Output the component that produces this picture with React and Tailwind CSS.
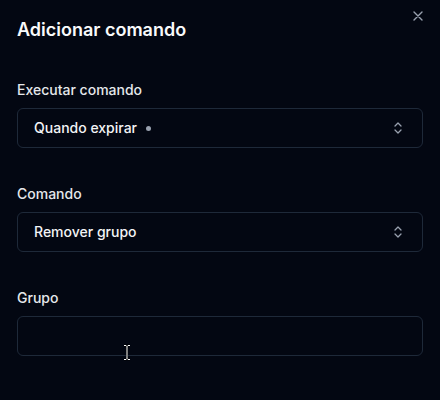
import React from 'react';

const Chevrons = () => (
  <svg viewBox="0 0 8 14" className="h-[14px] w-[8px] text-gray-400" fill="none" stroke="currentColor" strokeWidth="1.3" strokeLinecap="round" strokeLinejoin="round">
    <path d="M1 5 L4 2 L7 5" />
    <path d="M1 9 L4 12 L7 9" />
  </svg>
);

const SelectBox = ({ value, dot }) => (
  <div className="flex h-10 w-full items-center justify-between rounded-md border border-gray-800 pl-4 pr-5">
    <span className="flex items-center gap-[9px] text-sm font-medium text-gray-100">
      {value}
      {dot && <span className="h-[5px] w-[5px] rounded-full bg-gray-400" />}
    </span>
    <Chevrons />
  </div>
);

const Field = ({ label, children }) => (
  <div>
    <label className="mb-2 block text-sm font-medium leading-5 text-gray-200">{label}</label>
    {children}
  </div>
);

export default function App() {
  return (
    <div className="relative min-h-[400px] w-full bg-[#030712] px-[17px] pt-4 font-['Inter',sans-serif]">
      <button className="absolute right-[17px] top-[11px] text-gray-400">
        <svg viewBox="0 0 10 10" className="h-[10px] w-[10px]" fill="none" stroke="currentColor" strokeWidth="1.4" strokeLinecap="round">
          <path d="M1 1 L9 9 M9 1 L1 9" />
        </svg>
      </button>

      <h2 className="text-lg font-semibold leading-7 text-gray-50">Adicionar comando</h2>

      <div className="mt-9 flex flex-col gap-9">
        <Field label="Executar comando">
          <SelectBox value="Quando expirar" dot />
        </Field>
        <Field label="Comando">
          <SelectBox value="Remover grupo" />
        </Field>
        <Field label="Grupo">
          <div className="relative h-10 w-full rounded-md border border-gray-800">
            <svg viewBox="0 0 8 17" className="absolute left-[105px] top-[27px] h-[17px] w-[8px]" fill="none">
              <path d="M1 1.5 H3 L4 2.5 L5 1.5 H7 M4 2.5 V14.5 M1 15.5 H3 L4 14.5 L5 15.5 H7" stroke="#000" strokeWidth="2.2" />
              <path d="M1 1.5 H3 L4 2.5 L5 1.5 H7 M4 2.5 V14.5 M1 15.5 H3 L4 14.5 L5 15.5 H7" stroke="#fff" strokeWidth="1" />
            </svg>
          </div>
        </Field>
      </div>
    </div>
  );
}
